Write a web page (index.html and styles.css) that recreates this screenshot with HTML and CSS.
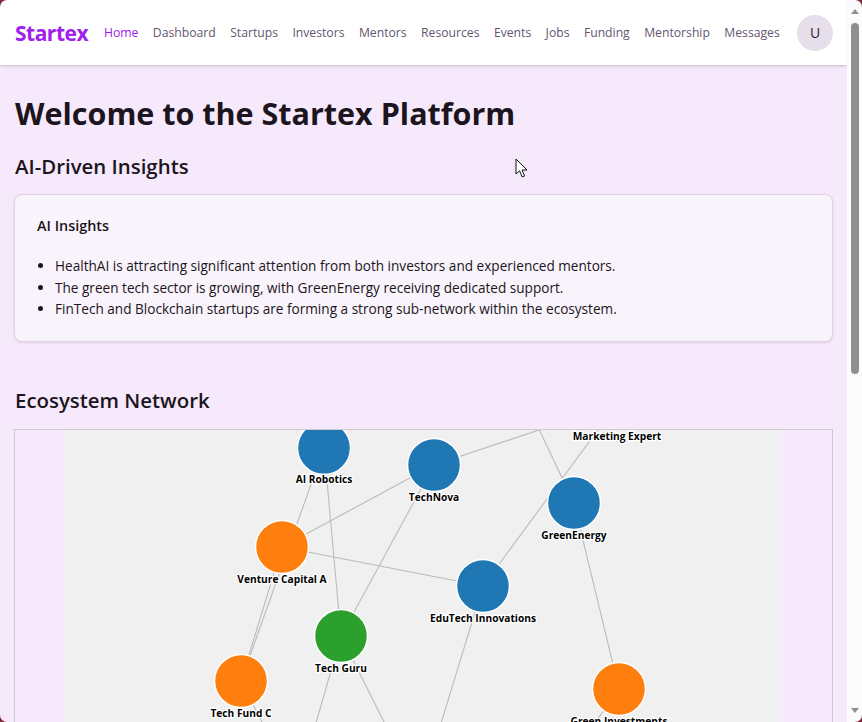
FILE: index.html
```html
<!DOCTYPE html>
<html lang="en">
<head>
<meta charset="utf-8">
<title>Startex</title>
<link rel="stylesheet" href="styles.css">
</head>
<body>
<div class="window">
  <div class="page">
    <header class="topbar">
      <div class="logo">Startex</div>
      <nav class="nav">
        <a class="nav-link active">Home</a>
        <a class="nav-link">Dashboard</a>
        <a class="nav-link">Startups</a>
        <a class="nav-link">Investors</a>
        <a class="nav-link">Mentors</a>
        <a class="nav-link">Resources</a>
        <a class="nav-link">Events</a>
        <a class="nav-link">Jobs</a>
        <a class="nav-link">Funding</a>
        <a class="nav-link">Mentorship</a>
        <a class="nav-link">Messages</a>
      </nav>
      <div class="avatar">U</div>
    </header>
    <main class="content">
      <h1 class="title">Welcome to the Startex Platform</h1>
      <h2 class="section-title">AI-Driven Insights</h2>
      <section class="card">
        <h3 class="card-title">AI Insights</h3>
        <ul class="insights">
          <li>HealthAI is attracting significant attention from both investors and experienced mentors.</li>
          <li>The green tech sector is growing, with GreenEnergy receiving dedicated support.</li>
          <li>FinTech and Blockchain startups are forming a strong sub-network within the ecosystem.</li>
        </ul>
      </section>
      <h2 class="section-title network-title">Ecosystem Network</h2>
      <div class="graph-box">
        <svg class="graph" width="716" height="400" viewBox="65 430 716 400">
          <g class="edges">
            <line x1="324" y1="448" x2="241" y2="681"/>
            <line x1="324" y1="448" x2="341" y2="636"/>
            <line x1="434" y1="465" x2="282" y2="547"/>
            <line x1="434" y1="465" x2="341" y2="636"/>
            <line x1="434" y1="465" x2="554" y2="425"/>
            <line x1="574" y1="503" x2="537" y2="425"/>
            <line x1="483" y1="586" x2="617" y2="404"/>
            <line x1="574" y1="503" x2="619" y2="689"/>
            <line x1="282" y1="547" x2="483" y2="586"/>
            <line x1="282" y1="547" x2="241" y2="681"/>
            <line x1="483" y1="586" x2="439" y2="730"/>
            <line x1="341" y1="636" x2="314" y2="730"/>
            <line x1="341" y1="636" x2="388" y2="730"/>
            <line x1="241" y1="681" x2="266" y2="730"/>
            <line x1="619" y1="689" x2="590" y2="730"/>
          </g>
          <g class="nodes">
            <circle class="startup" cx="324" cy="448" r="26.5"/>
            <circle class="startup" cx="434" cy="465" r="26.5"/>
            <circle class="startup" cx="574" cy="503" r="26.5"/>
            <circle class="investor" cx="282" cy="547" r="26.5"/>
            <circle class="startup" cx="483" cy="586" r="26.5"/>
            <circle class="mentor" cx="341" cy="636" r="26.5"/>
            <circle class="investor" cx="241" cy="681" r="26.5"/>
            <circle class="investor" cx="619" cy="689" r="26.5"/>
          </g>
          <g class="labels">
            <text x="324" y="483">AI Robotics</text>
            <text x="434" y="501">TechNova</text>
            <text x="574" y="539">GreenEnergy</text>
            <text x="617" y="440">Marketing Expert</text>
            <text x="282" y="583">Venture Capital A</text>
            <text x="483" y="622">EduTech Innovations</text>
            <text x="341" y="672">Tech Guru</text>
            <text x="241" y="717">Tech Fund C</text>
            <text x="619" y="725">Green Investments</text>
          </g>
        </svg>
      </div>
    </main>
  </div>
  <aside class="scrollbar">
    <span class="arrow-up"></span>
    <span class="thumb"></span>
    <span class="arrow-down"></span>
  </aside>
  <svg class="cursor" width="14" height="21" viewBox="0 0 14 21">
    <path d="M1 1 L1 16 L4.6 12.8 L7.2 19 L9.6 18 L7 12 L12 12 Z" fill="#fff" stroke="#111" stroke-width="1"/>
  </svg>
  <span class="corner corner-tl"></span>
  <span class="corner corner-tr"></span>
  <span class="corner corner-bl"></span>
  <span class="corner corner-br"></span>
</div>
</body>
</html>
```
FILE: styles.css
```css
* { box-sizing: border-box; }
html, body { margin: 0; padding: 0; height: 100%; overflow: hidden; }
body { font-family: "Open Sans", "Noto Sans", "Liberation Sans", sans-serif; color: #1c1520; background: #fff; }
.window { position: relative; display: flex; width: 862px; height: 722px; overflow: hidden; }
.page { width: 847px; flex: none; height: 722px; overflow: hidden; background: #f6e9fb; }
.topbar { display: flex; align-items: center; height: 65px; padding: 0 14px 0 15px; background: #fff; box-shadow: 0 1px 3px rgba(0,0,0,.2); position: relative; }
.logo { font-size: 21px; font-weight: 700; letter-spacing: -.5px; color: #a020f0; width: 89px; flex: none; }
.nav { display: flex; gap: 14.4px; flex: none; }
.nav-link { font-size: 12.2px; font-weight: 500; color: #655670; white-space: nowrap; }
.nav-link.active { color: #a020f0; }
.avatar { margin-left: auto; width: 36px; height: 36px; border-radius: 50%; background: #e6deea; display: flex; align-items: center; justify-content: center; font-size: 14px; color: #2a1e33; }
.content { padding: 29px 14px 0 15px; }
.title { margin: 0; font-size: 30.5px; line-height: 38px; font-weight: 700; color: #1c1520; }
.section-title { margin: 20px 0 0; font-size: 20.4px; line-height: 28px; font-weight: 550; color: #1c1520; }
.card { margin: 14px 0 0 -1px; padding: 20px 22px 22px; height: 148px; border: 1px solid #dcd3e3; border-radius: 8px; background: #f9f4fc; box-shadow: 0 1px 3px rgba(0,0,0,.1); }
.card-title { margin: 0; font-size: 14.4px; line-height: 22px; font-weight: 600; }
.insights { margin: 18px 0 0; padding: 0 0 0 18px; font-size: 13.6px; line-height: 21.5px; }
.network-title { margin-top: 44px; }
.graph-box { margin: 15px 0 0 -1px; height: 400px; border: 1px solid #ccc; display: flex; overflow: hidden; }
.graph { display: block; flex: none; margin-left: 50px; background: #f0f0f0; }
.edges line { stroke: #bbb; stroke-width: 1.1; }
.nodes circle { stroke: #fff; stroke-width: 1.5; }
.startup { fill: #1f77b4; }
.investor { fill: #ff7f0e; }
.mentor { fill: #2ca02c; }
.labels text { font-size: 10.2px; font-weight: 700; text-anchor: middle; fill: #000; stroke: #fff; stroke-width: 2.5px; paint-order: stroke; }
.scrollbar { flex: 1; position: relative; background: #fbfbfb; display: flex; flex-direction: column; align-items: center; }
.arrow-up { margin-top: 9px; width: 0; height: 0; border-left: 4px solid transparent; border-right: 4px solid transparent; border-bottom: 5px solid #8f8f8f; }
.thumb { margin-top: 9px; width: 8px; height: 351px; border-radius: 4px; background: #8f8f8f; }
.arrow-down { margin-top: auto; margin-bottom: 9px; width: 0; height: 0; border-left: 4px solid transparent; border-right: 4px solid transparent; border-top: 5px solid #8f8f8f; }
.cursor { position: absolute; left: 515px; top: 158px; }
.corner { position: absolute; width: 7px; height: 7px; background: #7e2a3a; }
.corner-tl { left: 0; top: 0; clip-path: path("M0 0H7A7 7 0 0 0 0 7Z"); }
.corner-tr { right: 0; top: 0; clip-path: path("M0 0H7V7A7 7 0 0 0 0 0Z"); }
.corner-bl { left: 0; bottom: 0; clip-path: path("M0 0A7 7 0 0 0 7 7H0Z"); }
.corner-br { right: 0; bottom: 0; clip-path: path("M7 0V7H0A7 7 0 0 0 7 0Z"); }
```
